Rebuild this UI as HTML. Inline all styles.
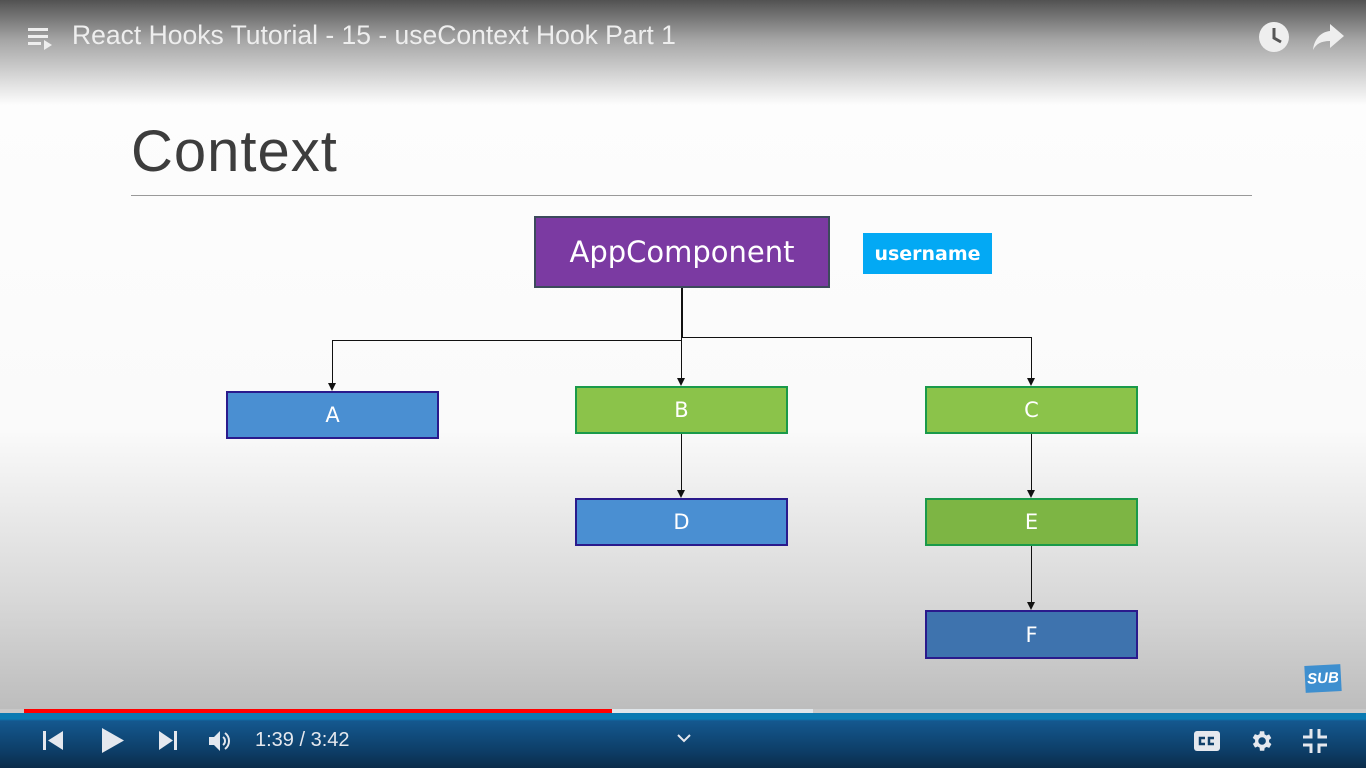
<!DOCTYPE html>
<html><head><style>
body{margin:0;width:1366px;height:768px;overflow:hidden;position:relative;font-family:"Liberation Sans",sans-serif;
background:linear-gradient(to bottom,#fefefe 0px,#fafafa 430px,#d8d8d8 600px,#bcbcbc 712px);}
.top{position:absolute;left:0;top:0;width:1366px;height:110px;background:linear-gradient(to bottom,rgba(0,0,0,.68),rgba(0,0,0,.35) 40px,rgba(0,0,0,0) 105px);}
.title{position:absolute;left:72px;top:20px;color:#eee;font-size:26.5px;}
.box{position:absolute;color:#fff;font-family:"DejaVu Sans",sans-serif;font-size:21px;display:flex;align-items:center;justify-content:center;box-sizing:border-box;}
.blue{background:#4a8fd2;border:2px solid #2a1a8c;}
.green{background:#8bc34a;border:2px solid #1a9a4a;}
.ln{position:absolute;background:#111;}
.ar{position:absolute;width:0;height:0;border-left:4px solid transparent;border-right:4px solid transparent;border-top:8px solid #111;}
.bar{position:absolute;left:0;top:712px;width:1366px;height:56px;background:linear-gradient(to bottom,#0a7ab2 0,#0a7ab2 7px,#14588f 9px,#0d3d66 40px,#0b2c4a 56px);}
.ctl{position:absolute;top:740px;color:#e5e8ee;}
</style></head><body>
<div class="top"></div>
<svg style="position:absolute;left:28px;top:26px" width="28" height="26"><g fill="#eee"><rect x="0" y="2" width="20" height="3"/><rect x="0" y="9" width="20" height="3"/><rect x="0" y="16" width="13" height="3"/><polygon points="16,14 16,24 24,19"/></g></svg>
<div class="title">React Hooks Tutorial - 15 - useContext Hook Part 1</div>
<svg style="position:absolute;left:1257px;top:20px" width="34" height="34"><circle cx="17" cy="17" r="15" fill="#eee"/><path d="M17 8v10l7 4" stroke="#555" stroke-width="3" fill="none"/></svg>
<svg style="position:absolute;left:1312px;top:22px" width="34" height="30"><path d="M18 2l14 12-14 12v-7C9 19 4 22 1 28 2 18 8 10 18 9z" fill="#eee"/></svg>
<div style="position:absolute;left:131px;top:118px;font-size:58px;color:#3d3d3d;letter-spacing:1px;">Context</div>
<div style="position:absolute;left:131px;top:195px;width:1121px;height:1px;background:#999"></div>
<div class="box" style="left:534px;top:216px;width:296px;height:72px;background:#7b3aa2;border:2px solid #3c4a5c;font-size:29px">AppComponent</div>
<div class="box" style="left:863px;top:233px;width:129px;height:41px;background:#03a9f4;font-weight:bold;font-size:19px">username</div>
<div class="ln" style="left:681px;top:288px;width:2px;height:50px"></div>
<div class="ln" style="left:332px;top:340px;width:350px;height:1px"></div>
<div class="ln" style="left:682px;top:337px;width:350px;height:1px"></div>
<div class="ln" style="left:332px;top:340px;width:1px;height:44px"></div><div class="ar" style="left:328px;top:383px"></div>
<div class="ln" style="left:681px;top:338px;width:1px;height:40px"></div><div class="ar" style="left:677px;top:378px"></div>
<div class="ln" style="left:1031px;top:337px;width:1px;height:41px"></div><div class="ar" style="left:1027px;top:378px"></div>
<div class="ln" style="left:681px;top:434px;width:1px;height:56px"></div><div class="ar" style="left:677px;top:490px"></div>
<div class="ln" style="left:1031px;top:434px;width:1px;height:56px"></div><div class="ar" style="left:1027px;top:490px"></div>
<div class="ln" style="left:1031px;top:546px;width:1px;height:56px"></div><div class="ar" style="left:1027px;top:602px"></div>
<div class="box blue" style="left:226px;top:391px;width:213px;height:48px">A</div>
<div class="box green" style="left:575px;top:386px;width:213px;height:48px">B</div>
<div class="box green" style="left:925px;top:386px;width:213px;height:48px">C</div>
<div class="box blue" style="left:575px;top:498px;width:213px;height:48px">D</div>
<div class="box green" style="left:925px;top:498px;width:213px;height:48px;background:#7db544">E</div>
<div class="box blue" style="left:925px;top:610px;width:213px;height:49px;background:#3e73ae">F</div>
<div style="position:absolute;left:1305px;top:665px;width:36px;height:27px;background:#3e8fcf;color:#fff;font-weight:bold;font-style:italic;font-size:15px;text-align:center;line-height:27px;transform:rotate(-3deg)">SUB</div>
<div class="bar"></div>
<div style="position:absolute;left:0;top:709px;width:1366px;height:4px;background:#c8c8c8"></div>
<div style="position:absolute;left:612px;top:709px;width:201px;height:4px;background:#e0e6ea"></div>
<div style="position:absolute;left:24px;top:709px;width:588px;height:4px;background:#f00"></div>
<svg style="position:absolute;left:43px;top:730px" width="22" height="22"><rect x="0" y="1" width="3" height="19" fill="#e5e8ee"/><polygon points="20,1 20,20 5,10.5" fill="#e5e8ee"/></svg>
<svg style="position:absolute;left:102px;top:728px" width="24" height="26"><polygon points="0,0 0,25 22,12.5" fill="#e5e8ee"/></svg>
<svg style="position:absolute;left:159px;top:730px" width="22" height="22"><polygon points="0,1 0,20 14,10.5" fill="#e5e8ee"/><rect x="15" y="1" width="3" height="19" fill="#e5e8ee"/></svg>
<svg style="position:absolute;left:209px;top:730px" width="26" height="22"><polygon points="0,7 5,7 11,1 11,21 5,15 0,15" fill="#e5e8ee"/><path d="M14 7a5 5 0 0 1 0 8M16 3a10 10 0 0 1 0 16" stroke="#e5e8ee" stroke-width="2" fill="none"/></svg>
<div class="ctl" style="left:255px;top:729px;font-size:20px">1:39 / 3:42</div>
<svg style="position:absolute;left:677px;top:733px" width="14" height="10"><path d="M1 2l6 6 6-6" stroke="#e5e8ee" stroke-width="2" fill="none"/></svg>
<svg style="position:absolute;left:1194px;top:730px" width="28" height="22"><rect x="0" y="1" width="26" height="20" rx="3" fill="#e5e8ee"/><path d="M11 8h-5v6h5M20 8h-5v6h5" stroke="#0f3f6a" stroke-width="2.5" fill="none"/></svg>
<svg style="position:absolute;left:1248px;top:728px" width="26" height="26" viewBox="0 0 24 24"><path fill="#e5e8ee" d="M19.4 13a7.5 7.5 0 0 0 0-2l2.1-1.6-2-3.5-2.5 1a7 7 0 0 0-1.7-1L15 3h-4l-.4 2.6a7 7 0 0 0-1.7 1l-2.5-1-2 3.5L6.6 11a7.5 7.5 0 0 0 0 2l-2.1 1.6 2 3.5 2.5-1a7 7 0 0 0 1.7 1L11 21h4l.4-2.6a7 7 0 0 0 1.7-1l2.5 1 2-3.5zM13 15.5A3.5 3.5 0 1 1 13 8.5a3.5 3.5 0 0 1 0 7z"/></svg>
<svg style="position:absolute;left:1303px;top:729px" width="24" height="24"><path d="M8 0v8H0M16 0v8h8M8 24v-8H0M16 24v-8h8" stroke="#e5e8ee" stroke-width="3" fill="none"/></svg>
</body></html>
